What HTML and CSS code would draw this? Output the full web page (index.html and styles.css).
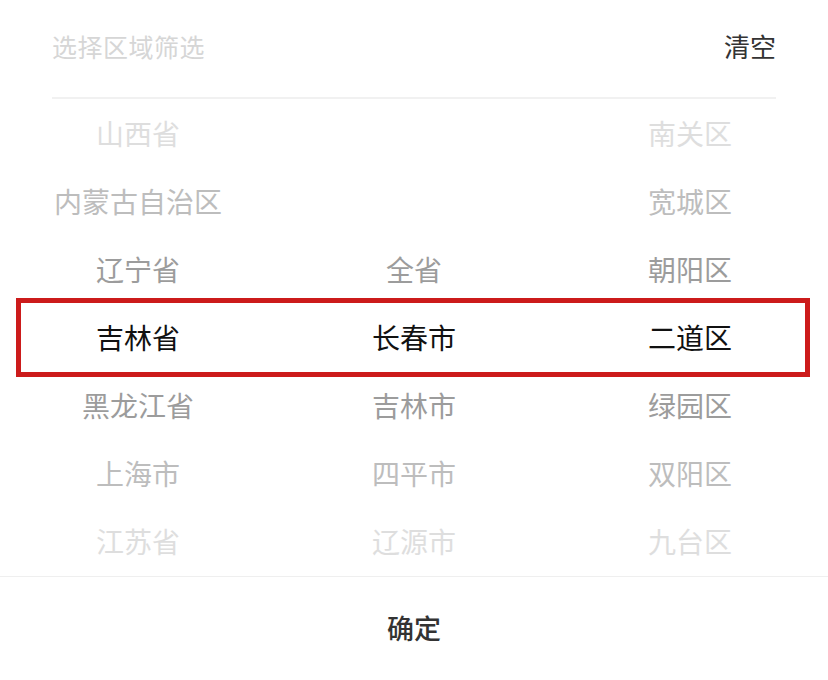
FILE: index.html
```html
<!DOCTYPE html>
<html lang="zh-CN">
<head>
<meta charset="utf-8">
<link rel="stylesheet" href="styles.css">
</head>
<body>
<div class="sheet">
  <header class="head">
    <span class="title">选择区域筛选</span>
    <span class="clear">清空</span>
  </header>
  <div class="picker">
    <div class="col">
      <div class="item far3">山西省</div>
      <div class="item far2">内蒙古自治区</div>
      <div class="item far1">辽宁省</div>
      <div class="item sel">吉林省</div>
      <div class="item far1">黑龙江省</div>
      <div class="item far2">上海市</div>
      <div class="item far3">江苏省</div>
    </div>
    <div class="col">
      <div class="item"></div>
      <div class="item"></div>
      <div class="item far1">全省</div>
      <div class="item sel">长春市</div>
      <div class="item far1">吉林市</div>
      <div class="item far2">四平市</div>
      <div class="item far3">辽源市</div>
    </div>
    <div class="col">
      <div class="item far3">南关区</div>
      <div class="item far2">宽城区</div>
      <div class="item far1">朝阳区</div>
      <div class="item sel">二道区</div>
      <div class="item far1">绿园区</div>
      <div class="item far2">双阳区</div>
      <div class="item far3">九台区</div>
    </div>
    <div class="highlight"></div>
  </div>
  <footer class="foot">
    <span class="ok">确定</span>
  </footer>
</div>
</body>
</html>
```

FILE: styles.css
```css
html, body {
  margin: 0;
  padding: 0;
  background: #ffffff;
}
body {
  font-family: "Noto Sans CJK SC", "Noto Sans", sans-serif;
  width: 828px;
  height: 680px;
  overflow: hidden;
}
.sheet {
  display: flex;
  flex-direction: column;
  height: 680px;
}
.head {
  height: 99px;
  margin: 0 52px;
  border-bottom: 2px solid #f1f1f1;
  display: flex;
  align-items: center;
  justify-content: space-between;
  box-sizing: border-box;
  padding-bottom: 6px;
}
.title {
  font-size: 25px;
  color: #d6d6d6;
  letter-spacing: 0.5px;
}
.clear {
  font-size: 26px;
  color: #333;
}
.picker {
  position: relative;
  display: grid;
  grid-template-columns: 1fr 1fr 1fr;
  padding-top: 1px;
  border-bottom: 1px solid #efefef;
}
.col {
  display: flex;
  flex-direction: column;
}
.item {
  height: 68px;
  display: flex;
  align-items: center;
  justify-content: center;
  font-size: 28px;
  line-height: 1;
  padding-bottom: 2px;
  box-sizing: border-box;
}
.sel { color: #111; }
.far1 { color: #9c9c9c; }
.far2 { color: #bdbdbd; }
.far3 { color: #dedede; }
.highlight {
  position: absolute;
  left: 16px;
  top: 199px;
  width: 784px;
  height: 69px;
  border: 5px solid #cc1b1b;
}
.foot {
  flex: 1;
  display: flex;
  align-items: center;
  justify-content: center;
  padding-bottom: 3px;
}
.ok {
  font-size: 27px;
  font-weight: 500;
  color: #333;
}
```
